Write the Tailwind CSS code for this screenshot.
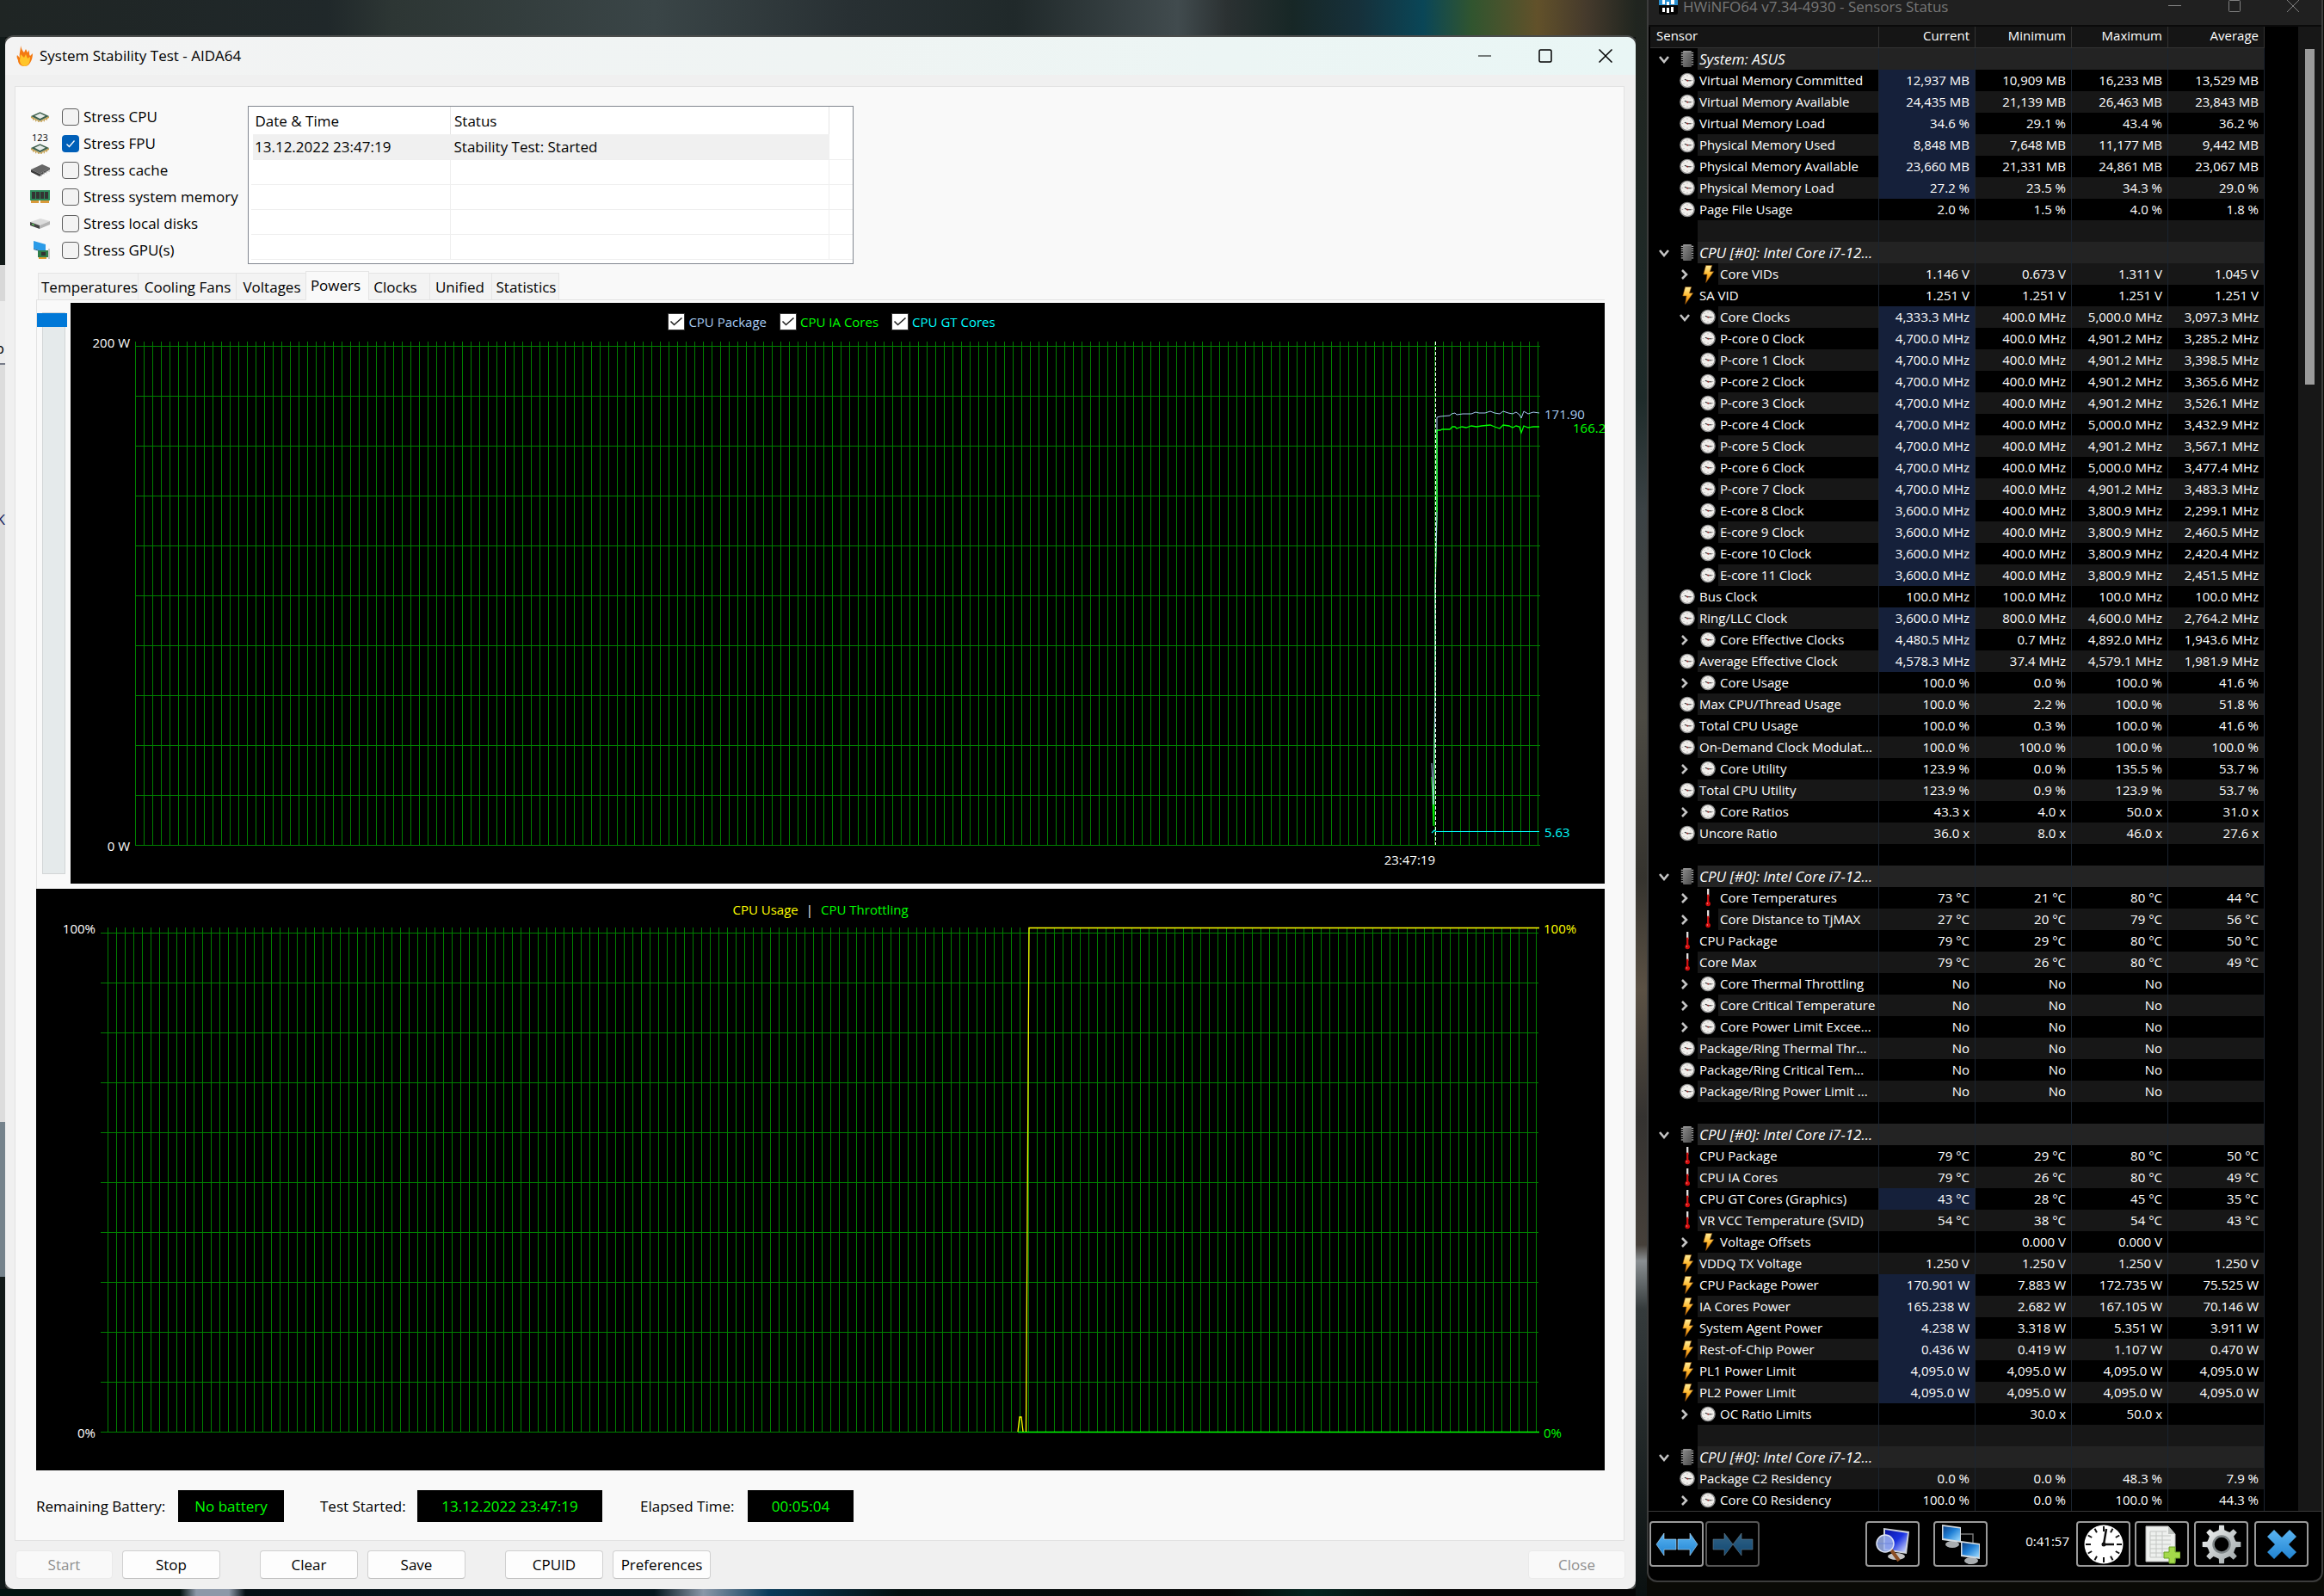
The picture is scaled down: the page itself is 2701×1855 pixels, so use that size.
<!DOCTYPE html>
<html lang="en">
<head>
    <meta charset="UTF-8">
    <meta name="viewport" content="width=device-width, initial-scale=1.0">
    <title>System Stability Test - AIDA64</title>
    <script src="https://cdn.jsdelivr.net/npm/@tailwindcss/browser@4"></script>
</head>
<body class="bg-[#0c100f] font-['Open_Sans','Noto_Sans',sans-serif] text-[17px] leading-6 text-black">

    <!-- Shared icons -->
    <svg class="absolute size-0" aria-hidden="true">
        <defs>
            <linearGradient id="g-bolt" x1="0" y1="0" x2="0" y2="1"><stop offset="0" stop-color="#fff0a0"/><stop offset=".5" stop-color="#ffb92e"/><stop offset="1" stop-color="#d97808"/></linearGradient>
            <linearGradient id="g-chip" x1="0" y1="0" x2="1" y2="1"><stop offset="0" stop-color="#8a8a8a"/><stop offset="1" stop-color="#4c4c4c"/></linearGradient>
            <linearGradient id="g-arrow" x1="0" y1="0" x2="0" y2="1"><stop offset="0" stop-color="#5ab4f2"/><stop offset="1" stop-color="#2184d2"/></linearGradient>
            <linearGradient id="g-screen" x1="0" y1="0" x2="1" y2="1"><stop offset="0" stop-color="#0a3f86"/><stop offset=".45" stop-color="#1f7fd6"/><stop offset="1" stop-color="#9fdcff"/></linearGradient>
            <linearGradient id="g-navy" x1="0" y1="0" x2="1" y2="1"><stop offset="0" stop-color="#0a14a0"/><stop offset=".5" stop-color="#1b33e0"/><stop offset="1" stop-color="#e4ecff"/></linearGradient>
            <linearGradient id="g-steel" x1="0" y1="0" x2="1" y2="1"><stop offset="0" stop-color="#f4f6f6"/><stop offset="1" stop-color="#9aa2a4"/></linearGradient>
        </defs>
        <symbol id="i-clock" viewBox="0 0 20 20">
            <circle cx="10" cy="10" r="9" fill="#f1efec" stroke="#8d8d8d" stroke-width="1.6"/>
            <path d="M10 3v1.6M10 15.400v1.600M3 10h1.600M15.400 10h1.600M5 5l1 1M15 5l-1 1M5 15l1-1M15 15l-1-1" stroke="#999" stroke-width=".8"/>
            <path d="M6.500 8.500L10.500 10.300H15" stroke="#333" stroke-width="1.200" fill="none"/>
            <circle cx="10.300" cy="10.200" r="1" fill="#a33"/>
        </symbol>
        <symbol id="i-bolt" viewBox="0 0 18 22">
            <path d="M6.500 0.500h7.500l-2.500 7.500h4.500L6.500 21.500l1.500-10H3.500z" fill="url(#g-bolt)" stroke="#8a4a06" stroke-width=".6"/>
        </symbol>
        <symbol id="i-therm" viewBox="0 0 18 22">
            <path d="M8 0h2.400v9H8z" fill="#e4e0e0"/><path d="M8 7h2.400v10H8z" fill="#d01212"/><circle cx="9.200" cy="18.400" r="2.900" fill="#d00c0c"/><circle cx="8.400" cy="17.800" r=".8" fill="#ff8a8a"/>
        </symbol>
        <symbol id="i-chip" viewBox="0 0 20 22">
            <path d="M2 3h16M2 6h16M2 9h16M2 12h16M2 15h16M2 18h16" stroke="#a9a9a9" stroke-width="1.400"/>
            <rect x="4.500" y="0.500" width="11" height="21" rx="1" fill="url(#g-chip)"/><path d="M5 1.500h10" stroke="#aaa"/>
        </symbol>
        <symbol id="i-down" viewBox="0 0 14 14"><path d="M2 4l5 6 5-6" fill="none" stroke="#c4c4c4" stroke-width="2.600"/></symbol>
        <symbol id="i-right" viewBox="0 0 14 14"><path d="M4 2l5 5-5 5" fill="none" stroke="#c4c4c4" stroke-width="2.600"/></symbol>
        <symbol id="i-cpu" viewBox="0 0 24 12">
            <path d="M1 5l11 6 11-6v2l-11 5L1 7z" fill="#c9a04a"/>
            <path d="M12 0l11 5-11 5.500L1 5z" fill="#3d5f4c"/><path d="M12 1.600l6.500 3.200L12 8.200 5.500 4.800z" fill="#e6ebe8"/>
            <path d="M4 8v2M7 9.500v2M10 10.500V12M14 10.500V12M17 9.500v2M20 8v2" stroke="#b58a2c"/>
        </symbol>
    </svg>

    <div class="flex min-h-screen overflow-hidden">

        <!-- Left side: wallpaper and the stability test window -->
        <div class="flex min-w-0 flex-1 flex-col">
            <div class="h-[43px] shrink-0 bg-[linear-gradient(90deg,#1f2524_0%,#20282a_20%,#2d3634_24%,#3a4547_40%,#283033_52%,#20292a_62%,#414b4e_72%,#2b3132_75%,#172726_79%,#16303a_83%,#0a4657_87%,#31552f_90%,#62512a_94%,#453a2c_97%,#20251f_100%)]"></div>
            <div class="flex">
                <div class="relative w-[6px] shrink-0 overflow-hidden bg-[#121a19]">
                    <div class="mt-[265px] h-[42px] bg-[#d8d8d8]"></div>
                    <div class="flex h-[74px] items-end justify-end border-b-2 border-[#777b88] bg-[#ececec] pb-[5px] pr-px"><span>p</span></div>
                    <div class="flex h-[880px] justify-end bg-[#dcdcdc] pt-[168px] text-[#141c60]"><span>K</span></div>
                    <div class="h-[180px] bg-[#75838c]"></div>
                </div>

                <main class="min-w-0 flex-1 overflow-hidden rounded-[10px] bg-[#f0f0f0] ring-2 ring-[#4a4c4b]">
                    <header class="flex h-[44px] items-center bg-[linear-gradient(90deg,#f3f3f3,#eff4f3_50%,#e9f6f5)] pl-[13px]">
                        <svg class="h-[24px] w-[20px]" viewBox="0 0 20 24">
                            <path d="M5 0c1 4 2 6 4 8l2-4 2 4c1-1 1-1 2-3 0 4 0 5 1 7l3-3c0 4-1 8-3 11-2 3-4 4-7 4-4 0-7-3-7-7-1-2-2-4-1-6l3 3C3 9 5 6 5 0z" fill="#f47a12"/>
                            <path d="M5 10l4 4 2-4 2 5 3-2c0 5-1 10-6 11-4 0-6-4-6-7z" fill="#ffc52a"/>
                        </svg>
                        <h1 class="ml-[7px] flex-1">System Stability Test - AIDA64</h1>
                        <button class="grid h-full w-[70px] place-items-center" aria-label="Minimize"><svg class="size-4" viewBox="0 0 16 16"><path d="M0 8h15" stroke="#000"/></svg></button>
                        <button class="grid h-full w-[70px] place-items-center" aria-label="Maximize"><svg class="size-4" viewBox="0 0 16 16"><rect x="1" y="1" width="14" height="14" rx="1.500" fill="none" stroke="#000" stroke-width="1.500"/></svg></button>
                        <button class="grid h-full w-[70px] place-items-center" aria-label="Close window"><svg class="size-4" viewBox="0 0 16 16"><path d="M.5.5l15 15m0-15l-15 15" stroke="#000" stroke-width="1.500"/></svg></button>
                    </header>

                    <div class="ml-[11px] mr-[13px] mt-[13px] border border-[#e2e2e2] bg-[#f9f9f9] pl-[24px] pr-[22px]">

                        <!-- Stress options and event log -->
                        <div class="-ml-[7px] flex pt-[19px]">
                            <ul class="w-[253px] shrink-0">
                                <li class="flex h-[31px] items-center">
                                    <svg class="mr-[14px] h-[12px] w-[23px]"><use href="#i-cpu"/></svg>
                                    <input id="cpu" type="checkbox" class="size-5 shrink-0 appearance-none rounded border border-[#5f5f5f] bg-[#f3f3f3]">
                                    <label for="cpu" class="pl-[5px] whitespace-nowrap">Stress CPU</label>
                                </li>
                                <li class="flex h-[31px] items-center">
                                    <svg class="mr-[14px] h-[24px] w-[23px]" viewBox="0 0 23 24"><text x="2" y="9" font-size="11">123</text><use href="#i-cpu" y="12" width="23" height="12"/></svg>
                                    <span class="relative grid size-5 shrink-0 place-items-center">
                                        <input id="fpu" type="checkbox" checked class="size-5 appearance-none rounded bg-[#005fb8]">
                                        <svg class="pointer-events-none absolute size-3" viewBox="0 0 12 12"><path d="M1.500 6.500l3 3 6-7" fill="none" stroke="#fff" stroke-width="1.300"/></svg>
                                    </span>
                                    <label for="fpu" class="pl-[5px] whitespace-nowrap">Stress FPU</label>
                                </li>
                                <li class="flex h-[31px] items-center">
                                    <svg class="mr-[14px] h-[14px] w-[23px]" viewBox="0 0 23 14"><path d="M1 6L14 0l9 4-12 7z" fill="#666"/><path d="M1 6l10 5v3L1 9z" fill="#3c3c3c"/><path d="M11 11l12-7v2l-12 8z" fill="#4c4c4c"/><path d="M13 11v3M16 9v3M19 7.500v3M22 6v3" stroke="#aaa"/></svg>
                                    <input id="cache" type="checkbox" class="size-5 shrink-0 appearance-none rounded border border-[#5f5f5f] bg-[#f3f3f3]">
                                    <label for="cache" class="pl-[5px] whitespace-nowrap">Stress cache</label>
                                </li>
                                <li class="flex h-[31px] items-center">
                                    <svg class="mr-[14px] h-[15px] w-[23px]" viewBox="0 0 23 15"><path d="M0 0h23v12H0z" fill="#2f8a5b"/><path d="M2 2h4v8H2zM7 2h4v8H7zM12 2h4v8h-4zM17 2h4v8h-4z" fill="#333"/><path d="M1 12h9v3H1zM12 12h10v3H12z" fill="#d99a3a"/></svg>
                                    <input id="mem" type="checkbox" class="size-5 shrink-0 appearance-none rounded border border-[#5f5f5f] bg-[#f3f3f3]">
                                    <label for="mem" class="pl-[5px] whitespace-nowrap">Stress system memory</label>
                                </li>
                                <li class="flex h-[31px] items-center">
                                    <svg class="mr-[14px] h-[12px] w-[23px]" viewBox="0 0 23 12"><path d="M0 4L12 0l11 3-12 5z" fill="#dcdcdc"/><path d="M0 4l11 4v4L0 8z" fill="#444"/><path d="M11 8l12-5v4l-12 5z" fill="#b4b4b4"/><path d="M2 6.500l3 1" stroke="#6f6"/></svg>
                                    <input id="disk" type="checkbox" class="size-5 shrink-0 appearance-none rounded border border-[#5f5f5f] bg-[#f3f3f3]">
                                    <label for="disk" class="pl-[5px] whitespace-nowrap">Stress local disks</label>
                                </li>
                                <li class="flex h-[31px] items-center">
                                    <svg class="mr-[14px] h-[22px] w-[23px]" viewBox="0 0 23 22"><path d="M4 0l14 4v9L4 9z" fill="#2b9be8"/><path d="M4 9l14 4v1L4 10z" fill="#155a90"/><path d="M9 11h12v8H9z" fill="#2f7d4a"/><path d="M13 13h5v4h-5z" fill="#333"/><path d="M10 19h9v2h-9z" fill="#e0a030"/><path d="M22 9v12" stroke="#999"/></svg>
                                    <input id="gpu" type="checkbox" class="size-5 shrink-0 appearance-none rounded border border-[#5f5f5f] bg-[#f3f3f3]">
                                    <label for="gpu" class="pl-[5px] whitespace-nowrap">Stress GPU(s)</label>
                                </li>
                            </ul>
                            <div class="mt-[3px] h-[184px] w-[704px] overflow-hidden border border-[#828790] bg-white">
                                <table class="w-full table-fixed border-collapse text-left">
                                    <colgroup><col class="w-[232px]"><col class="w-[440px]"><col></colgroup>
                                    <thead>
                                        <tr class="h-[32px]"><th class="border-r border-[#e5e5e5] pt-[2px] pl-[5px] font-normal">Date &amp; Time</th><th class="border-r border-[#e5e5e5] pt-[2px] pl-[4px] font-normal">Status</th><th></th></tr>
                                    </thead>
                                    <tbody>
                                        <tr class="h-[29px] border-b border-[#efefef]"><td class="border-l-[5px] border-l-white bg-[#f0f0f0] pt-[2px] pl-[2px]">13.12.2022 23:47:19</td><td class="bg-[#f0f0f0] pt-[2px] pl-[4px]">Stability Test: Started</td><td></td></tr>
                                        <tr class="h-[29px] border-b border-[#efefef]"><td class="border-r border-[#efefef]"></td><td class="border-r border-[#efefef]"></td><td></td></tr>
                                        <tr class="h-[29px] border-b border-[#efefef]"><td class="border-r border-[#efefef]"></td><td class="border-r border-[#efefef]"></td><td></td></tr>
                                        <tr class="h-[29px] border-b border-[#efefef]"><td class="border-r border-[#efefef]"></td><td class="border-r border-[#efefef]"></td><td></td></tr>
                                        <tr class="h-[29px] border-b border-[#efefef]"><td class="border-r border-[#efefef]"></td><td class="border-r border-[#efefef]"></td><td></td></tr>
                                    </tbody>
                                </table>
                            </div>
                        </div>

                        <!-- Tabs -->
                        <div class="mt-[8px] flex items-end pl-[2px]" role="tablist">
                            <button role="tab" class="h-[31px] w-[117px] border border-b-0 border-[#e5e5e5] bg-[#f3f3f3] pt-px pl-[3px]">Temperatures</button>
                            <button role="tab" class="h-[31px] w-[114px] border-t border-r border-[#e5e5e5] bg-[#f3f3f3] pt-px pl-px whitespace-nowrap">Cooling Fans</button>
                            <button role="tab" class="h-[31px] w-[80px] border-t border-[#e5e5e5] bg-[#f3f3f3] pt-px pl-[2px]">Voltages</button>
                            <button role="tab" aria-selected="true" class="-mb-px h-[34px] w-[74px] border border-b-0 border-[#e5e5e5] bg-[#f9f9f9] pr-[4px] pb-[2px]">Powers</button>
                            <button role="tab" class="h-[31px] w-[71px] border-t border-r border-[#e5e5e5] bg-[#f3f3f3] pt-px pr-[9px]">Clocks</button>
                            <button role="tab" class="h-[31px] w-[72px] border-t border-r border-[#e5e5e5] bg-[#f3f3f3] pt-px pr-[2px]">Unified</button>
                            <button role="tab" class="h-[31px] w-[78px] border-t border-r border-[#e5e5e5] bg-[#f3f3f3] pt-px pl-[2px]">Statistics</button>
                        </div>

                        <!-- Powers chart -->
                        <div class="flex border-t border-l border-[#e2e2e2] pt-[3px] pb-[6px]">
                            <div class="flex w-[39px] shrink-0 justify-center pt-[11px] pr-px pb-[11px]">
                                <input type="range" min="0" max="100" value="0" aria-label="Vertical scale" class="m-0 w-[27px] appearance-none border border-[#d2d5d6] bg-[#e5eaeb] [writing-mode:vertical-lr] [&::-webkit-slider-thumb]:-ml-[4px] [&::-webkit-slider-thumb]:h-4 [&::-webkit-slider-thumb]:w-[35px] [&::-webkit-slider-thumb]:appearance-none [&::-webkit-slider-thumb]:bg-[#0078d7]">
                            </div>
                            <section class="min-w-0 flex-1 bg-black pt-3 text-[15px] leading-5">
                                <div class="flex justify-center gap-[15px] pr-[14px]">
                                    <span class="relative flex items-center gap-1">
                                        <input id="pkg" type="checkbox" checked class="size-5 appearance-none border border-[#333] bg-white">
                                        <svg class="pointer-events-none absolute size-5" viewBox="0 0 20 20"><path d="M3.500 9.500l4 4 9-8" fill="none" stroke="#222" stroke-width="1.600"/></svg>
                                        <label for="pkg" class="text-[#a6caf0]">CPU Package</label>
                                    </span>
                                    <span class="relative flex items-center gap-1">
                                        <input id="ia" type="checkbox" checked class="size-5 appearance-none border border-[#333] bg-white">
                                        <svg class="pointer-events-none absolute size-5" viewBox="0 0 20 20"><path d="M3.500 9.500l4 4 9-8" fill="none" stroke="#222" stroke-width="1.600"/></svg>
                                        <label for="ia" class="text-[#00ff00]">CPU IA Cores</label>
                                    </span>
                                    <span class="relative flex items-center gap-1">
                                        <input id="gt" type="checkbox" checked class="size-5 appearance-none border border-[#333] bg-white">
                                        <svg class="pointer-events-none absolute size-5" viewBox="0 0 20 20"><path d="M3.500 9.500l4 4 9-8" fill="none" stroke="#222" stroke-width="1.600"/></svg>
                                        <label for="gt" class="text-[#00ffff]">CPU GT Cores</label>
                                    </span>
                                </div>
                                <svg class="block aspect-[1783/643] w-full" viewBox="0 0 1783 643" font-size="15" fill="#fff">
                                    <path id="power-grid" stroke="#008000" fill="none" shape-rendering="crispEdges"/>
                                    <path d="M1582 515L1583 535L1584 572L1586 400L1586 300L1588 211V112L1592 112L1594 111L1603 111L1606 108L1609 108L1611 110L1617 108L1622 109L1628 107L1634 108L1640 107L1650 106L1655 108L1661 110L1665 106L1672 107L1676 109L1680 107L1684 108L1686 115L1689 107L1694 109L1700 108L1707 108" transform="translate(0 4)" fill="none" stroke="#00ff00" stroke-width="1.300"/>
                                    <path d="M1582 503L1584 551L1586 420L1586 300L1588 211L1588 101L1592 100L1603 99L1605 97L1609 96L1611 98L1618 97L1628 97L1633 95L1637 96L1644 96L1650 94L1655 96L1661 97L1665 94L1671 96L1676 97L1680 95L1684 98L1686 102L1689 94L1694 97L1700 95L1707 96" fill="none" stroke="#a6caf0"/>
                                    <path d="M1588 116V211" stroke="#00ff00"/>
                                    <path d="M1586.500 13V598" stroke="#fff" stroke-dasharray="4 2"/>
                                    <path d="M1582 584l3-3 2 1.500H1707" fill="none" stroke="#00ffff" stroke-width="1.200"/>
                                    <text x="69" y="20" text-anchor="end">200 W</text>
                                    <text x="69" y="605" text-anchor="end">0 W</text>
                                    <text x="1586" y="621" text-anchor="end">23:47:19</text>
                                    <text x="1713" y="103" fill="#a6caf0">171.90</text>
                                    <text x="1746" y="119" fill="#00ff00">166.2</text>
                                    <text x="1713" y="589" fill="#00ffff">5.63</text>
                                </svg>
                            </section>
                        </div>

                        <!-- CPU usage chart -->
                        <section class="bg-black pt-[14px] text-[15px] leading-[21px]">
                            <p class="flex justify-center gap-[9px] text-[#00ff00]"><span class="text-[#ffff00]">CPU Usage</span><span class="text-white">|</span><span>CPU Throttling</span></p>
                            <svg class="block aspect-[1823/641] w-full" viewBox="0 0 1823 641" font-size="15" fill="#fff">
                                <path id="usage-grid" stroke="#008000" fill="none" shape-rendering="crispEdges"/>
                                <path d="M1141 596.500H1747" stroke="#00ff00" stroke-width="1.500"/>
                                <path d="M1141 596l2-17h2l2 17M1150.500 596L1154 10.500H1747" fill="none" stroke="#ffff00" stroke-width="1.300"/>
                                <text x="69" y="17" text-anchor="end">100%</text>
                                <text x="69" y="603" text-anchor="end">0%</text>
                                <text x="1752" y="17" fill="#ffff00">100%</text>
                                <text x="1752" y="603" fill="#00ff00">0%</text>
                            </svg>
                        </section>

                        <!-- Test status -->
                        <div class="mt-[23px] mb-[21px] flex h-[37px] items-center">
                            <span class="w-[165px]">Remaining Battery:</span>
                            <output class="mr-[42px] grid h-full w-[123px] place-items-center bg-black text-[#00ff00]">No battery</output>
                            <span class="w-[113px]">Test Started:</span>
                            <output class="mr-[44px] grid h-full w-[215px] place-items-center bg-black text-[#00ff00]">13.12.2022 23:47:19</output>
                            <span class="w-[125px]">Elapsed Time:</span>
                            <output class="grid h-full w-[123px] place-items-center bg-black text-[#00ff00]">00:05:04</output>
                        </div>
                    </div>

                    <!-- Window buttons -->
                    <div class="mx-[12px] mt-[11px] mb-[12px] flex h-[33px]">
                        <button disabled class="mr-[11px] w-[113px] rounded border border-[#eaeaea] bg-[#f9f9f9] text-[#8e8e8e]">Start</button>
                        <button class="mr-[46px] w-[114px] rounded border border-[#d0d0d0] border-b-[#bababa] bg-[#fdfdfd]">Stop</button>
                        <button class="mr-[11px] w-[114px] rounded border border-[#d0d0d0] border-b-[#bababa] bg-[#fdfdfd]">Clear</button>
                        <button class="mr-[46px] w-[114px] rounded border border-[#d0d0d0] border-b-[#bababa] bg-[#fdfdfd]">Save</button>
                        <button class="mr-[11px] w-[114px] rounded border border-[#d0d0d0] border-b-[#bababa] bg-[#fdfdfd]">CPUID</button>
                        <button class="w-[114px] rounded border border-[#d0d0d0] border-b-[#bababa] bg-[#fdfdfd]">Preferences</button>
                        <button disabled class="ml-auto w-[113px] rounded border border-[#eaeaea] bg-[#f9f9f9] text-[#8e8e8e]">Close</button>
                    </div>
                </main>
            </div>
            <div class="min-h-[6px] flex-1 bg-[linear-gradient(90deg,#03120f_0%,#03120f_11%,#8d98a8_12%,#8d98a8_14%,#051015_15%,#04151d_40%,#8a97a8_43%,#0a3b5a_47%,#04100f_55%,#060606_75%,#03251f_80%,#050505_88%)]"></div>
        </div>

        <div class="w-[13px] shrink-0 bg-[linear-gradient(180deg,#20241f_0%,#1e2b2a_25%,#3b4245_32%,#4c4a43_45%,#35332e_55%,#5b5144_62%,#343230_70%,#46403a_78%,#8a8f92_79%,#353b3c_82%,#0a1010_100%)]"></div>

        <!-- Right side: sensors window -->
        <aside class="flex w-[787px] shrink-0 flex-col bg-[#0a0a06] pr-px text-[15px] text-white">
            <div class="flex flex-col overflow-hidden rounded-b-[12px] border-x-2 border-b-2 border-[#3c3c3c] bg-black">
                <header class="flex h-[29px] items-start bg-[#202020] text-[17px] leading-[15px] text-[#777]">
                    <svg class="ml-[12px] h-[17px] w-[22px] shrink-0" viewBox="0 0 22 17"><path d="M0 0h22v6H0z" fill="#2a8fd0"/><path d="M0 6h22v9q0 2-2 2H2q-2 0-2-2z" fill="#050505"/><path d="M4 0h3v5H4zM9 2h3v4H9zM14 0h4v5h-4zM4 9h3v5H4zM9 9h3v6H9zM14 8h3v6h-3z" fill="#fff"/></svg>
                    <h2 class="ml-[6px] flex-1">HWiNFO64 v7.34-4930 - Sensors Status</h2>
                    <button class="grid w-[70px] place-items-center" aria-label="Minimize sensors"><svg class="size-[15px]" viewBox="0 0 15 15"><path d="M0 6.500h15" stroke="#808080"/></svg></button>
                    <button class="grid w-[70px] place-items-center" aria-label="Maximize sensors"><svg class="size-[15px]" viewBox="0 0 15 15"><rect x=".5" y=".5" width="13" height="13" rx="1" fill="none" stroke="#808080"/></svg></button>
                    <button class="grid w-[66px] place-items-center" aria-label="Close sensors"><svg class="size-[15px]" viewBox="0 0 15 15"><path d="M0 0l14 14m0-14L0 14" stroke="#808080"/></svg></button>
                </header>
                <div class="flex border-t-2 border-b border-t-[#0a0a0a] border-b-[#3a3a3a] pl-[2px]">
                    <table class="w-[714px] table-fixed border-separate border-spacing-0">
                        <colgroup><col class="w-[266px]"><col class="w-[112px]"><col class="w-[112px]"><col class="w-[112px]"><col class="w-[112px]"></colgroup>
                        <thead>
                            <tr class="h-[25px] bg-[#151515]">
                                <th class="border-r border-b border-[#333] pb-1 pl-[7px] text-left leading-5 font-normal">Sensor</th>
                                <th class="border-r border-b border-[#333] pr-[6px] pb-1 text-right leading-5 font-normal">Current</th>
                                <th class="border-r border-b border-[#333] pr-[6px] pb-1 text-right leading-5 font-normal">Minimum</th>
                                <th class="border-r border-b border-[#333] pr-[6px] pb-1 text-right leading-5 font-normal">Maximum</th>
                                <th class="border-r border-b border-[#333] pr-[6px] pb-1 text-right leading-5 font-normal">Average</th>
                            </tr>
                        </thead>
                        <tbody id="sensors"></tbody>
                    </table>
                    <div class="ml-auto w-[27px] bg-[#171717] pt-[26px]"><div class="mx-auto h-[390px] w-[11px] bg-[#9b9b9b]"></div></div>
                </div>

                <!-- Toolbar -->
                <div class="flex h-[80px] items-start pt-[11px] pl-px">
                    <button class="grid h-[53px] w-[63px] place-items-center rounded border-2 border-[#9a9a9a]" aria-label="Widen columns">
                        <svg class="h-[28px] w-[50px]" viewBox="0 0 50 28"><path d="M1 14L10 1v7h14v12H10v7zM49 14L40 1v7H26v12h14v7z" fill="url(#g-arrow)" stroke="#bfe2fa" stroke-width=".6"/></svg>
                    </button>
                    <button class="ml-[2px] grid h-[53px] w-[63px] place-items-center rounded border-2 border-[#565656]" aria-label="Narrow columns">
                        <svg class="h-[28px] w-[48px] opacity-55" viewBox="0 0 48 28"><path d="M24 14L14 1v7H1v12h13v7zM24 14L34 1v7h13v12H34v7z" fill="url(#g-arrow)" stroke="#bfe2fa" stroke-width=".6"/></svg>
                    </button>
                    <button class="ml-[123px] grid h-[53px] w-[63px] place-items-center rounded border-2 border-[#9a9a9a]" aria-label="System summary">
                        <svg class="h-[42px] w-[42px]" viewBox="0 0 42 42">
                            <ellipse cx="25" cy="35" rx="10" ry="4" fill="#c4c4c4"/><path d="M10 2l30 4-3 26-27-4z" fill="#cfd3da"/><path d="M12 4l26 4-3 22-23-4z" fill="url(#g-navy)"/>
                            <path d="M18 26l10 14" stroke="#8b4e22" stroke-width="4"/><circle cx="12" cy="20" r="10" fill="#9fb4ee" fill-opacity=".85" stroke="#dfe6f6" stroke-width="1.500"/><path d="M3 20h18" stroke="#6f86d8"/>
                        </svg>
                    </button>
                    <button class="ml-[16px] grid h-[53px] w-[63px] place-items-center rounded border-2 border-[#9a9a9a]" aria-label="Remote sensors">
                        <svg class="h-[46px] w-[48px]" viewBox="0 0 48 46">
                            <path d="M22 11h16v12" fill="none" stroke="#777" stroke-width="1.500"/>
                            <ellipse cx="14" cy="23" rx="8" ry="4" fill="#a9adb0"/><path d="M2 0l22 3v18L2 18z" fill="#d3dae0"/><path d="M3.500 2L23 4.500v14.500L3.500 16z" fill="url(#g-screen)"/>
                            <ellipse cx="36" cy="42" rx="8" ry="4" fill="#a9adb0"/><path d="M24 19l22 3v18l-22-3z" fill="#d3dae0"/><path d="M25.500 21L45 23.500V38l-19.500-3z" fill="url(#g-screen)"/>
                        </svg>
                    </button>
                    <time class="ml-[37px] w-[58px] pt-[11px] text-right">0:41:57</time>
                    <button class="ml-[8px] grid h-[53px] w-[63px] place-items-center rounded border-2 border-[#9a9a9a]" aria-label="Reset clock">
                        <svg class="h-[46px] w-[46px]" viewBox="0 0 46 46"><circle cx="23" cy="23" r="22.500" fill="#fff"/>
                            <path d="M23 2v6M23 38v6M2 23h6M38 23h6M12.500 4.800l2.500 4.400M33.500 4.800L31 9.200M12.500 41.200l2.500-4.400M33.500 41.200L31 36.800M4.800 12.500l4.400 2.500M41.200 12.500L36.800 15M4.800 33.500L9.200 31M41.200 33.500L36.800 31" stroke="#111" stroke-width="2"/>
                            <path d="M23 23L26 5M21 23h14" stroke="#111" stroke-width="2.500"/><circle cx="23" cy="23" r="2.500" fill="#111"/></svg>
                    </button>
                    <button class="ml-[5px] grid h-[53px] w-[63px] place-items-center rounded border-2 border-[#9a9a9a]" aria-label="Log to file">
                        <svg class="h-[46px] w-[42px]" viewBox="0 0 42 46"><path d="M2 2h26l8 9v32H2z" fill="#eef0ee" stroke="#bbb"/><path d="M28 2v9h8z" fill="#bfc3c0"/>
                            <path d="M7 8h19M7 13h24M7 18h24M7 23h24M7 28h24M7 33h18M7 38h16M7 8v30M14 8v30M21 8v30" stroke="#c3c6c3"/>
                            <path d="M29 26h7v6h6v7h-6v6h-7v-6h-6v-7h6z" fill="#a4d94a" stroke="#6ba322"/></svg>
                    </button>
                    <button class="ml-[6px] grid h-[53px] w-[63px] place-items-center rounded border-2 border-[#9a9a9a]" aria-label="Settings">
                        <svg class="h-[46px] w-[46px]" viewBox="0 0 46 46"><path id="gear" fill="url(#g-steel)" fill-rule="evenodd"/><circle cx="23" cy="23" r="9.500" fill="#000" stroke="#7d8486" stroke-width="2.500"/></svg>
                    </button>
                    <button class="ml-[7px] grid h-[53px] w-[63px] place-items-center rounded border-2 border-[#9a9a9a]" aria-label="Close">
                        <svg class="size-[36px]" viewBox="0 0 36 36"><path d="M9 1l9 9 9-9 8 8-9 9 9 9-8 8-9-9-9 9-8-8 9-9-9-9z" fill="url(#g-arrow)"/></svg>
                    </button>
                </div>
            </div>
        </aside>
    </div>

    <script>
        // Row format: [kind, icon, name, current, minimum, maximum, average, highlighted]
        // kind: h = section, r = reading, c = collapsed group, o = open group, s = reading inside a group
        const rows = [
            ['h', 'chip', 'System: ASUS'],
            ['r', 'clock', 'Virtual Memory Committed', '12,937 MB', '10,909 MB', '16,233 MB', '13,529 MB', 1],
            ['r', 'clock', 'Virtual Memory Available', '24,435 MB', '21,139 MB', '26,463 MB', '23,843 MB', 1],
            ['r', 'clock', 'Virtual Memory Load', '34.6 %', '29.1 %', '43.4 %', '36.2 %', 1],
            ['r', 'clock', 'Physical Memory Used', '8,848 MB', '7,648 MB', '11,177 MB', '9,442 MB', 1],
            ['r', 'clock', 'Physical Memory Available', '23,660 MB', '21,331 MB', '24,861 MB', '23,067 MB', 1],
            ['r', 'clock', 'Physical Memory Load', '27.2 %', '23.5 %', '34.3 %', '29.0 %', 1],
            ['r', 'clock', 'Page File Usage', '2.0 %', '1.5 %', '4.0 %', '1.8 %'],
            [],
            ['h', 'chip', 'CPU [#0]: Intel Core i7-12...'],
            ['c', 'bolt', 'Core VIDs', '1.146 V', '0.673 V', '1.311 V', '1.045 V'],
            ['r', 'bolt', 'SA VID', '1.251 V', '1.251 V', '1.251 V', '1.251 V'],
            ['o', 'clock', 'Core Clocks', '4,333.3 MHz', '400.0 MHz', '5,000.0 MHz', '3,097.3 MHz', 1],
            ['s', 'clock', 'P-core 0 Clock', '4,700.0 MHz', '400.0 MHz', '4,901.2 MHz', '3,285.2 MHz', 1],
            ['s', 'clock', 'P-core 1 Clock', '4,700.0 MHz', '400.0 MHz', '4,901.2 MHz', '3,398.5 MHz', 1],
            ['s', 'clock', 'P-core 2 Clock', '4,700.0 MHz', '400.0 MHz', '4,901.2 MHz', '3,365.6 MHz', 1],
            ['s', 'clock', 'P-core 3 Clock', '4,700.0 MHz', '400.0 MHz', '4,901.2 MHz', '3,526.1 MHz', 1],
            ['s', 'clock', 'P-core 4 Clock', '4,700.0 MHz', '400.0 MHz', '5,000.0 MHz', '3,432.9 MHz', 1],
            ['s', 'clock', 'P-core 5 Clock', '4,700.0 MHz', '400.0 MHz', '4,901.2 MHz', '3,567.1 MHz', 1],
            ['s', 'clock', 'P-core 6 Clock', '4,700.0 MHz', '400.0 MHz', '5,000.0 MHz', '3,477.4 MHz', 1],
            ['s', 'clock', 'P-core 7 Clock', '4,700.0 MHz', '400.0 MHz', '4,901.2 MHz', '3,483.3 MHz', 1],
            ['s', 'clock', 'E-core 8 Clock', '3,600.0 MHz', '400.0 MHz', '3,800.9 MHz', '2,299.1 MHz', 1],
            ['s', 'clock', 'E-core 9 Clock', '3,600.0 MHz', '400.0 MHz', '3,800.9 MHz', '2,460.5 MHz', 1],
            ['s', 'clock', 'E-core 10 Clock', '3,600.0 MHz', '400.0 MHz', '3,800.9 MHz', '2,420.4 MHz', 1],
            ['s', 'clock', 'E-core 11 Clock', '3,600.0 MHz', '400.0 MHz', '3,800.9 MHz', '2,451.5 MHz', 1],
            ['r', 'clock', 'Bus Clock', '100.0 MHz', '100.0 MHz', '100.0 MHz', '100.0 MHz'],
            ['r', 'clock', 'Ring/LLC Clock', '3,600.0 MHz', '800.0 MHz', '4,600.0 MHz', '2,764.2 MHz', 1],
            ['c', 'clock', 'Core Effective Clocks', '4,480.5 MHz', '0.7 MHz', '4,892.0 MHz', '1,943.6 MHz', 1],
            ['r', 'clock', 'Average Effective Clock', '4,578.3 MHz', '37.4 MHz', '4,579.1 MHz', '1,981.9 MHz', 1],
            ['c', 'clock', 'Core Usage', '100.0 %', '0.0 %', '100.0 %', '41.6 %'],
            ['r', 'clock', 'Max CPU/Thread Usage', '100.0 %', '2.2 %', '100.0 %', '51.8 %'],
            ['r', 'clock', 'Total CPU Usage', '100.0 %', '0.3 %', '100.0 %', '41.6 %'],
            ['r', 'clock', 'On-Demand Clock Modulat...', '100.0 %', '100.0 %', '100.0 %', '100.0 %'],
            ['c', 'clock', 'Core Utility', '123.9 %', '0.0 %', '135.5 %', '53.7 %'],
            ['r', 'clock', 'Total CPU Utility', '123.9 %', '0.9 %', '123.9 %', '53.7 %'],
            ['c', 'clock', 'Core Ratios', '43.3 x', '4.0 x', '50.0 x', '31.0 x'],
            ['r', 'clock', 'Uncore Ratio', '36.0 x', '8.0 x', '46.0 x', '27.6 x'],
            [],
            ['h', 'chip', 'CPU [#0]: Intel Core i7-12...'],
            ['c', 'therm', 'Core Temperatures', '73 °C', '21 °C', '80 °C', '44 °C'],
            ['c', 'therm', 'Core Distance to TjMAX', '27 °C', '20 °C', '79 °C', '56 °C'],
            ['r', 'therm', 'CPU Package', '79 °C', '29 °C', '80 °C', '50 °C'],
            ['r', 'therm', 'Core Max', '79 °C', '26 °C', '80 °C', '49 °C'],
            ['c', 'clock', 'Core Thermal Throttling', 'No', 'No', 'No', ''],
            ['c', 'clock', 'Core Critical Temperature', 'No', 'No', 'No', ''],
            ['c', 'clock', 'Core Power Limit Excee...', 'No', 'No', 'No', ''],
            ['r', 'clock', 'Package/Ring Thermal Thr...', 'No', 'No', 'No', ''],
            ['r', 'clock', 'Package/Ring Critical Tem...', 'No', 'No', 'No', ''],
            ['r', 'clock', 'Package/Ring Power Limit ...', 'No', 'No', 'No', ''],
            [],
            ['h', 'chip', 'CPU [#0]: Intel Core i7-12...'],
            ['r', 'therm', 'CPU Package', '79 °C', '29 °C', '80 °C', '50 °C'],
            ['r', 'therm', 'CPU IA Cores', '79 °C', '26 °C', '80 °C', '49 °C'],
            ['r', 'therm', 'CPU GT Cores (Graphics)', '43 °C', '28 °C', '45 °C', '35 °C', 1],
            ['r', 'therm', 'VR VCC Temperature (SVID)', '54 °C', '38 °C', '54 °C', '43 °C'],
            ['c', 'bolt', 'Voltage Offsets', '', '0.000 V', '0.000 V', ''],
            ['r', 'bolt', 'VDDQ TX Voltage', '1.250 V', '1.250 V', '1.250 V', '1.250 V'],
            ['r', 'bolt', 'CPU Package Power', '170.901 W', '7.883 W', '172.735 W', '75.525 W', 1],
            ['r', 'bolt', 'IA Cores Power', '165.238 W', '2.682 W', '167.105 W', '70.146 W', 1],
            ['r', 'bolt', 'System Agent Power', '4.238 W', '3.318 W', '5.351 W', '3.911 W', 1],
            ['r', 'bolt', 'Rest-of-Chip Power', '0.436 W', '0.419 W', '1.107 W', '0.470 W', 1],
            ['r', 'bolt', 'PL1 Power Limit', '4,095.0 W', '4,095.0 W', '4,095.0 W', '4,095.0 W', 1],
            ['r', 'bolt', 'PL2 Power Limit', '4,095.0 W', '4,095.0 W', '4,095.0 W', '4,095.0 W', 1],
            ['c', 'clock', 'OC Ratio Limits', '', '30.0 x', '50.0 x', ''],
            [],
            ['h', 'chip', 'CPU [#0]: Intel Core i7-12...'],
            ['r', 'clock', 'Package C2 Residency', '0.0 %', '0.0 %', '48.3 %', '7.9 %'],
            ['c', 'clock', 'Core C0 Residency', '100.0 %', '0.0 %', '100.0 %', '44.3 %'],
        ];

        // --- Sensor table ---
        document.getElementById('sensors').innerHTML = rows.map((row, i) => {
            const [kind, icon, name, cur = '', min = '', max = '', avg = '', hot] = row;
            const section = kind === 'h';
            const nested = kind === 'c' || kind === 'o' || kind === 's';
            const shade = section ? 'bg-[#232323]' : i % 2 ? 'bg-black' : 'bg-[#171717]';
            const arrow = section || kind === 'o' ? 'down' : kind === 'c' ? 'right' : '';
            const chevron = arrow ? `<svg class="size-[14px]"><use href="#i-${arrow}"/></svg>` : '';
            const picture = icon ? `<svg class="h-[21px] w-[18px]"><use href="#i-${icon}"/></svg>` : '';
            const cells = [cur, min, max, avg].map((value, n) =>
                `<td class="h-[25px] border-r border-[#1b2430] p-0 pr-[6px] text-right whitespace-nowrap ${hot && n === 0 ? 'bg-[#15203a]' : shade}">${value}</td>`).join('');
            return `<tr class="h-[25px] leading-[25px]">
                <td class="h-[25px] border-r border-[#1b2430] p-0">
                    <div class="flex h-[25px] items-center">
                        <span class="flex h-full shrink-0 items-center justify-end ${nested ? 'w-[47px]' : 'w-[23px]'}">${chevron}</span>
                        <span class="flex h-full w-[32px] shrink-0 items-center justify-end pr-[3px]">${picture}</span>
                        <span class="h-full min-w-0 flex-1 overflow-hidden pl-[2px] whitespace-nowrap ${shade} ${section ? 'text-[17px] italic' : ''}">${name || ''}</span>
                    </div>
                </td>${cells}</tr>`;
        }).join('');

        // --- Chart grids ---
        function drawGrid(id, firstX, lastX, lineX, topY, lineY) {
            let d = '';
            for (let x = firstX; x <= lastX; x += 10) d += `M${x}.5 ${topY}V${lineY + 580}`;
            for (let y = lineY; y <= lineY + 580; y += 58) d += `M${lineX} ${y}.5H${lastX + 3}`;
            document.getElementById(id).setAttribute('d', d);
        }
        drawGrid('power-grid', 75, 1705, 75, 13, 18);
        drawGrid('usage-grid', 83, 1743, 75, 10, 16);

        // --- Settings gear ---
        let gear = '';
        for (let i = 0; i < 8; i++) {
            [[-.36, 16.5], [-.19, 17], [-.13, 22.5], [.13, 22.5], [.19, 17], [.36, 16.5]].forEach(([a, r]) => {
                const t = i * Math.PI / 4 + a;
                gear += (gear ? 'L' : 'M') + (23 + r * Math.sin(t)).toFixed(1) + ' ' + (23 - r * Math.cos(t)).toFixed(1);
            });
        }
        document.getElementById('gear').setAttribute('d', gear + 'z');
    </script>
</body>
</html>
